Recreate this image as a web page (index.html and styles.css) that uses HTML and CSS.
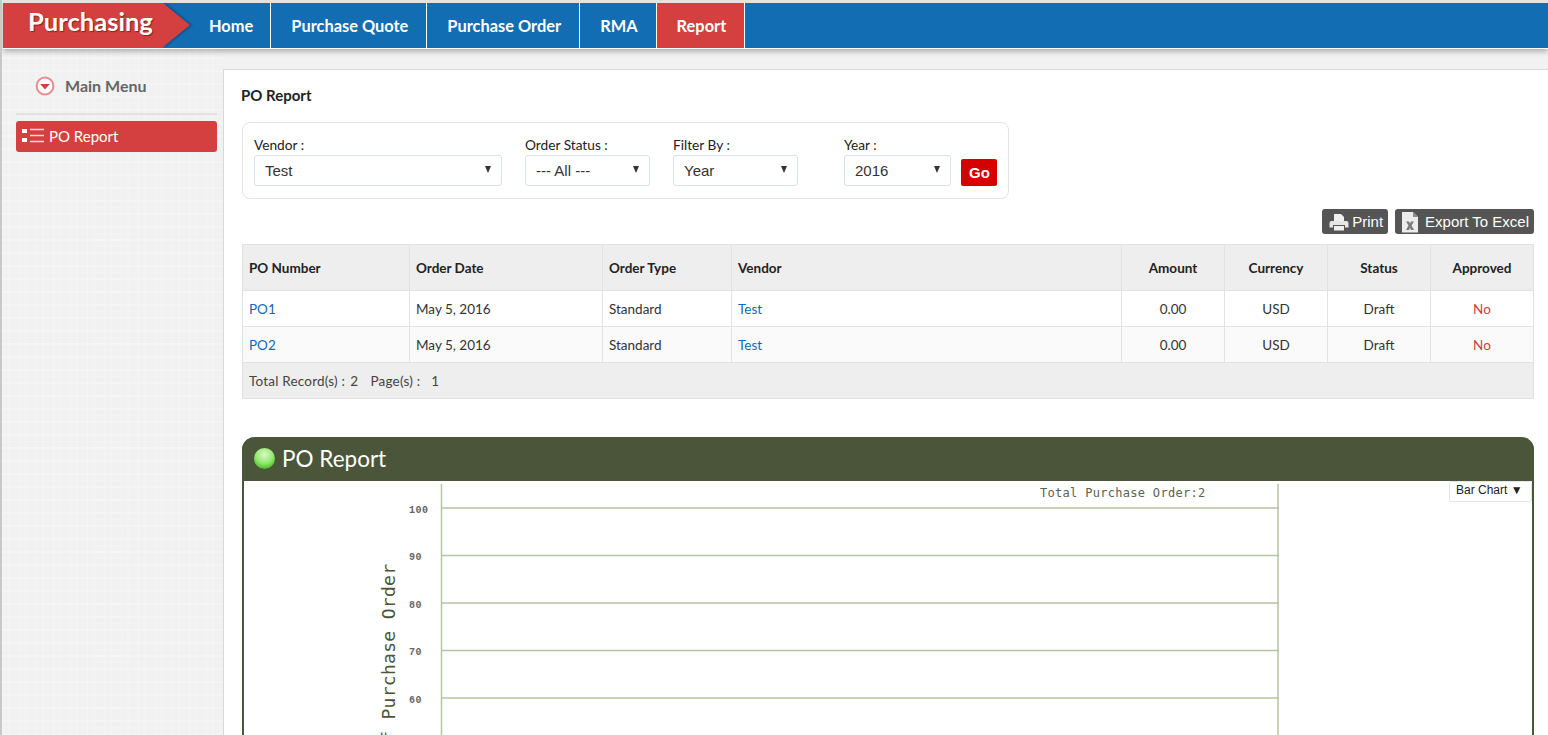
FILE: index.html
```html
<!DOCTYPE html>
<html lang="en">
<head>
    <meta charset="UTF-8">
    <title>PO Report</title>
    <link rel="stylesheet" href="styles.css">
</head>
<body>

    <header class="topbar">
        <div class="brand">Purchasing</div>
        <nav class="nav">
            <a class="nav-item home">Home</a>
            <a class="nav-item">Purchase Quote</a>
            <a class="nav-item">Purchase Order</a>
            <a class="nav-item">RMA</a>
            <a class="nav-item active">Report</a>
        </nav>
    </header>

    <div class="page">
        <aside class="sidebar">
            <div class="menu-title">
                <svg class="menu-icon" width="20" height="20" viewBox="0 0 20 20">
                    <circle cx="10" cy="10" r="8.4" fill="#fff" stroke="#e58f8f" stroke-width="2"/>
                    <path d="M5.2 8h9.6L10 13.4z" fill="#d43f3f"/>
                </svg>
                <span>Main Menu</span>
            </div>
            <a class="side-link">
                <svg width="22" height="16" viewBox="0 0 22 16">
                    <path d="M0 1h5v4H0zM0 10h5v4H0z" fill="#fff"/>
                    <path d="M8 1.5h14M8 7.5h14M8 13.5h14" stroke="#f6d9d9" stroke-width="1.4"/>
                </svg>
                <span>PO Report</span>
            </a>
        </aside>

        <main class="content">
            <h2>PO Report</h2>

            <div class="filters">
                <div class="field vendor">
                    <label>Vendor :</label>
                    <div class="select"><span>Test</span><i class="caret"></i></div>
                </div>
                <div class="field status">
                    <label>Order Status :</label>
                    <div class="select"><span>--- All ---</span><i class="caret"></i></div>
                </div>
                <div class="field filter-by">
                    <label>Filter By :</label>
                    <div class="select"><span>Year</span><i class="caret"></i></div>
                </div>
                <div class="field year">
                    <label>Year :</label>
                    <div class="select"><span>2016</span><i class="caret"></i></div>
                </div>
                <button class="go">Go</button>
            </div>

            <div class="actions">
                <a class="action">
                    <svg width="20" height="18" viewBox="0 0 20 18">
                        <path d="M5 1h7l3 3v4H5z" fill="#f0f0f0"/>
                        <path d="M2.500 8h15a2 2 0 0 1 2 2v4.500H16V12H4v2.500H.5V10a2 2 0 0 1 2-2z" fill="#e6e6e6"/>
                        <path d="M5 13h10v4.500H5z" fill="#f0f0f0"/>
                    </svg>
                    <span>Print</span>
                </a>
                <a class="action">
                    <svg width="18" height="22" viewBox="0 0 18 22">
                        <path d="M1 1h11l5 5v15.500H1z" fill="#ececec"/>
                        <path d="M12 1v5h5z" fill="#8c8c8c"/>
                        <path d="M5 10.500h3l1 2 1-2h3l-2.500 4 2.500 4.500h-3l-1-2.200L8 19H5l2.500-4.500z" fill="#7a7a7a"/>
                    </svg>
                    <span>Export To Excel</span>
                </a>
            </div>

            <table class="report">
                <thead>
                    <tr>
                        <th class="c-po">PO Number</th>
                        <th class="c-date">Order Date</th>
                        <th class="c-type">Order Type</th>
                        <th class="c-vendor">Vendor</th>
                        <th class="mid c-num">Amount</th>
                        <th class="mid c-num">Currency</th>
                        <th class="mid c-num">Status</th>
                        <th class="mid">Approved</th>
                    </tr>
                </thead>
                <tbody>
                    <tr>
                        <td><a>PO1</a></td>
                        <td>May 5, 2016</td>
                        <td>Standard</td>
                        <td><a>Test</a></td>
                        <td class="mid">0.00</td>
                        <td class="mid">USD</td>
                        <td class="mid">Draft</td>
                        <td class="mid no">No</td>
                    </tr>
                    <tr class="alt">
                        <td><a>PO2</a></td>
                        <td>May 5, 2016</td>
                        <td>Standard</td>
                        <td><a>Test</a></td>
                        <td class="mid">0.00</td>
                        <td class="mid">USD</td>
                        <td class="mid">Draft</td>
                        <td class="mid no">No</td>
                    </tr>
                </tbody>
                <tfoot>
                    <tr>
                        <td colspan="8">
                            <span class="total">Total Record(s) :</span><span class="count">2</span>
                            <span class="total pages">Page(s) :</span><span class="count wide">1</span>
                        </td>
                    </tr>
                </tfoot>
            </table>

            <section class="chart-panel">
                <div class="chart-head">
                    <i class="ball"></i>
                    <span>PO Report</span>
                </div>
                <div class="chart-body">
                    <div class="chart-type">Bar Chart &#9660;</div>
                    <svg class="chart" width="1288" height="254" viewBox="0 0 1288 254">
                        <path d="M197.500 3V254M1034 3V254" class="axis"/>
                        <path d="M197 27H1035M197 74.500H1035M197 122H1035M197 169.500H1035M197 217H1035" class="axis"/>
                        <text x="796" y="16" class="chart-title">Total Purchase Order:2</text>
                        <text x="165" y="32" class="tick">100</text>
                        <text x="165" y="79" class="tick">90</text>
                        <text x="165" y="127" class="tick">80</text>
                        <text x="165" y="174" class="tick">70</text>
                        <text x="165" y="222" class="tick">60</text>
                        <text x="0" y="0" class="y-label" transform="translate(151 272) rotate(-90)">of Purchase Order</text>
                    </svg>
                </div>
            </section>
        </main>
    </div>

</body>
</html>
```

FILE: styles.css
```css
html, body {
    height: 100%;
}

body {
    margin: 0;
    height: 735px;
    overflow: hidden;
    font-family: "Lato", Arial, sans-serif;
    font-size: 14px;
    color: #222;
    background-color: #f1f1f1;
    border-left: 2px solid #c8c8c8;
    box-sizing: border-box;
}

.topbar {
    display: flex;
    height: 49px;
    box-sizing: border-box;
    border-top: 3px solid #e3e3e3;
    border-bottom: 1px solid #fff;
    background-color: #126db3;
    box-shadow: 0 3px 5px rgba(0, 0, 0, 0.25);
    position: relative;
    margin-left: 1px;
}

.brand {
    position: relative;
    width: 160px;
    box-sizing: border-box;
    padding: 1px 0 0 25px;
    background-color: #d43f3f;
    color: #fff;
    font-size: 25.600px;
    font-weight: 700;
    line-height: 34px;
    text-shadow: 1px 1px 1px rgba(90, 30, 0, 0.7);
}

.brand::after {
    content: "";
    position: absolute;
    left: 160px;
    top: 0;
    border-left: 27px solid #d43f3f;
    border-top: 22.500px solid transparent;
    border-bottom: 22.500px solid transparent;
    filter: drop-shadow(2px 0 1px rgba(0, 40, 80, 0.45));
}

.nav {
    display: flex;
}

.nav-item {
    display: block;
    padding: 0 18px 0 20px;
    line-height: 45px;
    color: #fff;
    font-size: 16.400px;
    font-weight: 700;
    border-right: 1px solid #fff;
}

.nav-item.home {
    padding-left: 46px;
    padding-right: 17px;
}

.nav-item.active {
    background-color: #d43f3f;
}

.page {
    display: flex;
    align-items: flex-start;
}

.sidebar {
    width: 221px;
    flex: none;
    height: 686px;
    box-sizing: border-box;
    padding: 0 6px 0 14px;
    background-color: #f1f1f1;
    background-image:
        repeating-linear-gradient(0deg, rgba(255, 255, 255, 0.25) 0 2px, transparent 2px 7px, rgba(255, 255, 255, 0.14) 7px 8px, transparent 8px 13px),
        repeating-linear-gradient(90deg, rgba(255, 255, 255, 0.25) 0 1px, transparent 1px 6px, rgba(255, 255, 255, 0.16) 6px 8px, transparent 8px 17px);
}

.menu-title {
    display: flex;
    align-items: center;
    height: 66px;
    padding: 8px 0 0 19px;
    box-sizing: border-box;
    border-bottom: 2px solid #e2e2e2;
    color: #666;
    font-size: 16px;
    font-weight: 700;
}

.menu-title span {
    margin-left: 10px;
}

.menu-title .menu-icon {
    margin-top: 2px;
}

.side-link {
    display: flex;
    align-items: center;
    gap: 5px;
    height: 31px;
    margin-top: 6px;
    padding: 0 0 2px 6px;
    box-sizing: border-box;
    background-color: #d43f3f;
    border-radius: 3px;
    color: #fff;
    font-size: 15px;
}

.content {
    flex: 1;
    height: 666px;
    margin-top: 20px;
    padding: 0 14px 0 17px;
    background-color: #fff;
    border-top: 1px solid #d8d8d8;
    border-left: 1px solid #d8d8d8;
    overflow: hidden;
}

h2 {
    margin: 16px 0 18px;
    font-size: 15px;
    line-height: 18px;
    font-weight: 700;
    color: #222;
}

.filters {
    display: flex;
    align-items: flex-end;
    box-sizing: border-box;
    width: 767px;
    height: 77px;
    margin-left: 1px;
    padding: 0 11px 12px 11px;
    border: 1px solid #e1e4e8;
    border-radius: 8px;
}

.field label {
    display: block;
    font-size: 13.700px;
    line-height: 17px;
    margin-bottom: 2px;
    color: #222;
}

.select {
    display: flex;
    align-items: center;
    justify-content: space-between;
    box-sizing: border-box;
    height: 31px;
    padding: 0 10px 0 10px;
    border: 1px solid #dbe1e8;
    border-radius: 3px;
    font-family: "Liberation Sans", Arial, sans-serif;
    font-size: 15px;
    color: #333;
}

.caret {
    margin-top: -2px;
    border-top: 7px solid #333;
    border-left: 3.500px solid transparent;
    border-right: 3.500px solid transparent;
}

.vendor { width: 248px; margin-right: 23px; }
.status { width: 125px; margin-right: 23px; }
.filter-by { width: 125px; margin-right: 46px; }
.year { width: 107px; margin-right: 10px; }

.go {
    height: 27px;
    width: 36px;
    padding: 0 0 0 1px;
    border: none;
    border-radius: 2px;
    background-color: #d60000;
    color: #fff;
    font-family: "Liberation Sans", Arial, sans-serif;
    font-size: 15px;
    font-weight: 700;
}

.actions {
    display: flex;
    justify-content: flex-end;
    gap: 7px;
    margin-top: 10px;
    height: 25px;
}

.action {
    display: flex;
    align-items: center;
    gap: 3px;
    padding: 0 5px 0 7px;
    background-color: #555;
    border-radius: 3px;
    color: #fff;
    font-family: "Liberation Sans", Arial, sans-serif;
    font-size: 15px;
}

.action + .action {
    gap: 6px;
    padding-left: 6px;
}

.report {
    width: 1292px;
    margin: 10px 0 0 1px;
    border-collapse: collapse;
    table-layout: fixed;
    font-size: 13.500px;
}

.report th,
.report td {
    border: 1px solid #e2e2e2;
    padding: 0 6px;
    text-align: left;
}

.report th {
    height: 45px;
    background-color: #eeeeee;
    font-weight: 700;
    color: #222;
}

.report td {
    height: 35px;
    color: #333;
}

.report .mid {
    text-align: center;
}

.report .c-po { width: 154px; }
.report .c-date { width: 180px; }
.report .c-type { width: 116px; }
.report .c-vendor { width: 377px; }
.report .c-num { width: 90px; }

.report .alt td {
    background-color: #fafafa;
}

.report a {
    color: #1565b8;
}

.report .no {
    color: #c9403c;
}

.report tfoot td {
    background-color: #eeeeee;
    color: #444;
}

.total {
    letter-spacing: 0.200px;
}

.pages {
    margin-left: 9px;
}

.count {
    margin-left: 5px;
}

.count.wide {
    margin-left: 11px;
}

.chart-panel {
    margin: 38px 0 0 1px;
    width: 1292px;
    box-sizing: border-box;
    border-left: 2px solid #4b5539;
    border-right: 2px solid #4b5539;
    border-radius: 13px 13px 0 0;
}

.chart-head {
    display: flex;
    align-items: center;
    height: 44px;
    margin: 0 -2px;
    padding: 0 0 2px 12px;
    box-sizing: border-box;
    background-color: #4b5539;
    border-radius: 13px 13px 0 0;
    color: #fff;
    font-size: 22.500px;
}

.ball {
    width: 21px;
    height: 21px;
    margin-right: 7px;
    border-radius: 50%;
    background: radial-gradient(circle at 50% 32%, #dcfac8 0, #8fe86a 50%, #45b828 82%, #17900c 100%);
}

.chart-body {
    position: relative;
    height: 254px;
    background-color: #fff;
}

.chart-type {
    position: absolute;
    top: 0;
    right: 0;
    width: 83px;
    height: 21px;
    box-sizing: border-box;
    padding-left: 6px;
    border: 1px solid #e4e4ee;
    border-radius: 2px;
    background-color: #fff;
    font-family: "Liberation Sans", Arial, sans-serif;
    font-size: 12px;
    line-height: 17px;
    color: #222;
    z-index: 1;
}

.chart {
    display: block;
}

.axis {
    fill: none;
    stroke: #b5c4a3;
    stroke-width: 1.500;
}

.chart-title {
    font-family: "DejaVu Sans Mono", monospace;
    font-size: 12px;
    letter-spacing: 0.300px;
    fill: #5a6350;
}

.tick {
    font-family: "Liberation Mono", monospace;
    font-size: 10px;
    font-weight: 700;
    letter-spacing: 0.500px;
    fill: #666;
}

.y-label {
    font-family: "DejaVu Sans Mono", monospace;
    font-size: 18px;
    letter-spacing: 0.300px;
    fill: #4b5539;
}
```
